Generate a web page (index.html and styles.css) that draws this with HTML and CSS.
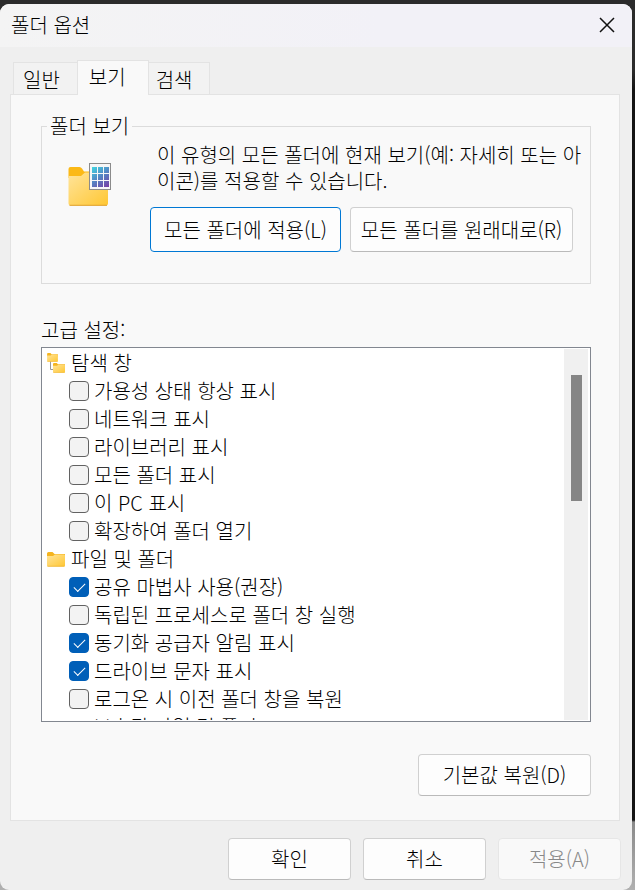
FILE: index.html
```html
<!DOCTYPE html>
<html lang="ko">
<head>
    <meta charset="UTF-8">
    <meta name="viewport" content="width=device-width, initial-scale=1.0">
    <title>폴더 옵션</title>
    <link rel="stylesheet" href="styles.css">
</head>
<body>
    <!-- shared icons -->
    <svg width="0" height="0" class="defs" aria-hidden="true">
        <defs>
            <linearGradient id="folder-fill" x1="0" y1="0" x2="1" y2="1">
                <stop offset="0" stop-color="#ffe49b"/>
                <stop offset="1" stop-color="#ffc733"/>
            </linearGradient>
            <linearGradient id="grid-fill" gradientUnits="userSpaceOnUse" x1="24" y1="3" x2="40" y2="24">
                <stop offset="0" stop-color="#3fdbe3"/>
                <stop offset="0.5" stop-color="#5487c4"/>
                <stop offset="1" stop-color="#7640a6"/>
            </linearGradient>
            <symbol id="folder" viewBox="0 0 18 15">
                <path d="M0 1.500Q0 0 1.500 0H5.500L7.500 2H18V6H0Z" fill="#f5b41f"/>
                <path d="M0 4H6L8 2.500H17Q18 2.500 18 3.500V13.500Q18 14.500 17 14.500H1Q0 14.500 0 13.500Z" fill="url(#folder-fill)"/>
                <path d="M0.500 14.300H17.500" stroke="#eeb02a" stroke-width="0.700"/>
            </symbol>
        </defs>
    </svg>

    <div class="dialog">
        <header class="titlebar">
            <h1>폴더 옵션</h1>
            <button class="close" aria-label="닫기">
                <svg width="16" height="16" viewBox="0 0 16 16"><path d="M1 1L15 15M15 1L1 15" stroke="#111" stroke-width="1.500" fill="none"/></svg>
            </button>
        </header>

        <main class="content">
            <div class="tabs" role="tablist">
                <button class="tab" role="tab">일반</button>
                <button class="tab active" role="tab" aria-selected="true">보기</button>
                <button class="tab" role="tab">검색</button>
            </div>

            <section class="panel">
                <fieldset class="folder-view">
                    <legend>폴더 보기</legend>
                    <svg class="view-icon" width="44" height="44" viewBox="0 0 44 44">
                        <path d="M0.500 6Q0.500 4 2.500 4H11.500Q13 4 14 5.500L16 8.500H38V15H0.500Z" fill="#fbb917"/>
                        <path d="M0.500 13H13L17 9.500H38Q40 9.500 40 11.500V40.500Q40 42.500 38 42.500H2.500Q0.500 42.500 0.500 40.500Z" fill="url(#folder-fill)"/>
                        <path d="M1.500 42.300H39" stroke="#dfa02c" stroke-width="1"/>
                        <rect x="21.500" y="0.500" width="21" height="26" fill="#f7f7f7" stroke="#8b8b8b"/>
                        <path d="M24 4h5v6h-5zM30 4h5v6h-5zM36 4h5v6h-5zM24 11h5v6h-5zM30 11h5v6h-5zM36 11h5v6h-5zM24 18h5v6h-5zM30 18h5v6h-5zM36 18h5v6h-5z" fill="url(#grid-fill)"/>
                    </svg>
                    <div class="view-body">
                        <p>이 유형의 모든 폴더에 현재 보기(예: 자세히 또는 아이콘)를 적용할 수 있습니다.</p>
                        <div class="view-buttons">
                            <button class="btn default">모든 폴더에 적용(L)</button>
                            <button class="btn">모든 폴더를 원래대로(R)</button>
                        </div>
                    </div>
                </fieldset>

                <h2 id="advanced">고급 설정:</h2>
                <div class="settings" role="group" aria-labelledby="advanced">
                    <ul class="tree">
                        <li class="group">
                            <svg width="18" height="20" viewBox="0 0 18 20">
                                <path d="M3.500 8V16.500H8" stroke="#999" fill="none"/>
                                <use href="#folder" x="0" y="0" width="11" height="9"/>
                                <use href="#folder" x="6" y="10" width="12" height="10"/>
                            </svg>
                            탐색 창
                        </li>
                        <li><label><input type="checkbox">가용성 상태 항상 표시</label></li>
                        <li><label><input type="checkbox">네트워크 표시</label></li>
                        <li><label><input type="checkbox">라이브러리 표시</label></li>
                        <li><label><input type="checkbox">모든 폴더 표시</label></li>
                        <li><label><input type="checkbox">이 PC 표시</label></li>
                        <li><label><input type="checkbox">확장하여 폴더 열기</label></li>
                        <li class="group">
                            <svg width="18" height="15"><use href="#folder"/></svg>
                            파일 및 폴더
                        </li>
                        <li><label><input type="checkbox" checked>공유 마법사 사용(권장)</label></li>
                        <li><label><input type="checkbox">독립된 프로세스로 폴더 창 실행</label></li>
                        <li><label><input type="checkbox" checked>동기화 공급자 알림 표시</label></li>
                        <li><label><input type="checkbox" checked>드라이브 문자 표시</label></li>
                        <li><label><input type="checkbox">로그온 시 이전 폴더 창을 복원</label></li>
                        <li class="subgroup">
                            <svg width="18" height="15"><use href="#folder"/></svg>
                            <span>보호된 파일 및 폴더</span>
                        </li>
                    </ul>
                    <div class="scrollbar"><div class="thumb"></div></div>
                </div>

                <div class="restore">
                    <button class="btn">기본값 복원(D)</button>
                </div>
            </section>
        </main>

        <footer class="actions">
            <button class="btn">확인</button>
            <button class="btn">취소</button>
            <button class="btn" disabled>적용(A)</button>
        </footer>
    </div>
</body>
</html>
```

FILE: styles.css
```css
* {
    box-sizing: border-box;
}

body {
    margin: 0;
    padding: 4px 3px 0 0;
    min-height: 100vh;
    background: linear-gradient(#2b2b2b 0, #2b2b2b 70px, #141414 90px, #141414 820px, #8a8a8a 822px, #b0b0b0 100%);
    font-family: "Noto Sans CJK KR", sans-serif;
    font-size: 20px;
    font-weight: 300;
    line-height: 28px;
    color: #000;
}

.defs {
    position: absolute;
}

h1,
h2,
p,
ul {
    margin: 0;
    padding: 0;
    font-size: inherit;
    font-weight: inherit;
}

button {
    font: inherit;
    color: inherit;
    padding: 0;
}

svg {
    display: block;
    flex-shrink: 0;
}

.dialog {
    min-height: calc(100vh - 4px);
    background: #efefef;
    border-radius: 9px;
    overflow: hidden;
}

.titlebar {
    display: flex;
    justify-content: space-between;
    align-items: center;
    height: 43px;
    padding: 0 17px 2px 11px;
    background: linear-gradient(90deg, #f4f4f4, #f2f1f7 60%);
}

.close {
    border: none;
    background: none;
}

.content {
    padding: 13px 12px 0 10px;
}

.tabs {
    display: flex;
    align-items: flex-end;
    padding-left: 3px;
}

.tab {
    height: 32px;
    padding: 3px 17px 0 9px;
    border: 1px solid #e3e3e3;
    border-bottom: none;
    background: #f2f2f2;
}

.tab:first-child {
    border-right: none;
}

.tab:last-child {
    padding-left: 7px;
    border-left: none;
}

.tab.active {
    height: 35px;
    padding: 0 22px 2px 11px;
    margin-bottom: -1px;
    background: #f9f9f9;
    z-index: 1;
}

.panel {
    padding: 17px 28px 24px 30px;
    border: 1px solid #e3e3e3;
    background: #f9f9f9;
}

.folder-view {
    display: flex;
    margin: 0;
    padding: 0 5px 31px 26px;
    border: 1px solid #dcdcdc;
    min-width: 0;
}

.folder-view legend {
    margin-left: -21px;
    padding: 0 3px;
}

.view-icon {
    margin-top: 23px;
}

.view-body {
    flex: 1;
    margin-left: 38px;
}

.view-body p {
    padding: 2px 0 0 7px;
    line-height: 26px;
}

.view-buttons {
    display: flex;
    gap: 9px;
    margin: 13px 12px 0 0;
}

.btn {
    height: 42px;
    background: #fdfdfd;
    border: 1px solid #d0d0d0;
    border-bottom-color: #bababa;
    border-radius: 4px;
}

.btn:disabled {
    color: #888;
    background: #f9f9f9;
    border-color: #e6e6e6;
}

.view-buttons .btn {
    height: 45px;
    flex: 1 1 223px;
}

.view-buttons .btn.default {
    flex: 1 1 191px;
    border-color: #0078d4;
}

h2 {
    margin-top: 32px;
}

.settings {
    display: flex;
    height: 375px;
    margin-top: 3px;
    padding: 1px 2px 1px 5px;
    background: #fff;
    border: 1px solid #828790;
}

.tree {
    flex: 1;
    overflow: hidden;
    list-style: none;
}

.tree li {
    height: 28px;
    padding-left: 22px;
    white-space: nowrap;
}

.tree .group,
.tree .subgroup {
    display: flex;
    align-items: center;
    gap: 6px;
    padding-left: 0;
}

.tree .subgroup {
    padding-left: 22px;
}

.tree label {
    display: flex;
    align-items: center;
    gap: 5px;
}

.tree input {
    appearance: none;
    flex-shrink: 0;
    width: 20px;
    height: 20px;
    margin: 0;
    border: 1px solid #626262;
    border-radius: 4px;
    background: #f3f3f3;
}

.tree input:checked {
    display: grid;
    place-items: center;
    border-color: #005fb8;
    background: #005fb8;
}

.tree input:checked::before {
    content: "";
    width: 10px;
    height: 5px;
    margin-bottom: 3px;
    border: solid #fff;
    border-width: 0 0 1px 1px;
    transform: rotate(-45deg);
}

.scrollbar {
    width: 24px;
    padding: 26px 6px 26px 7px;
    background: #f0f0f0;
}

.thumb {
    height: 126px;
    background: #858585;
}

.restore {
    display: flex;
    justify-content: flex-end;
    margin-top: 32px;
}

.restore .btn {
    width: 173px;
}

.actions {
    display: flex;
    justify-content: flex-end;
    gap: 12px;
    padding: 17px 11px 10px;
}

.actions .btn {
    width: 123px;
}
```
